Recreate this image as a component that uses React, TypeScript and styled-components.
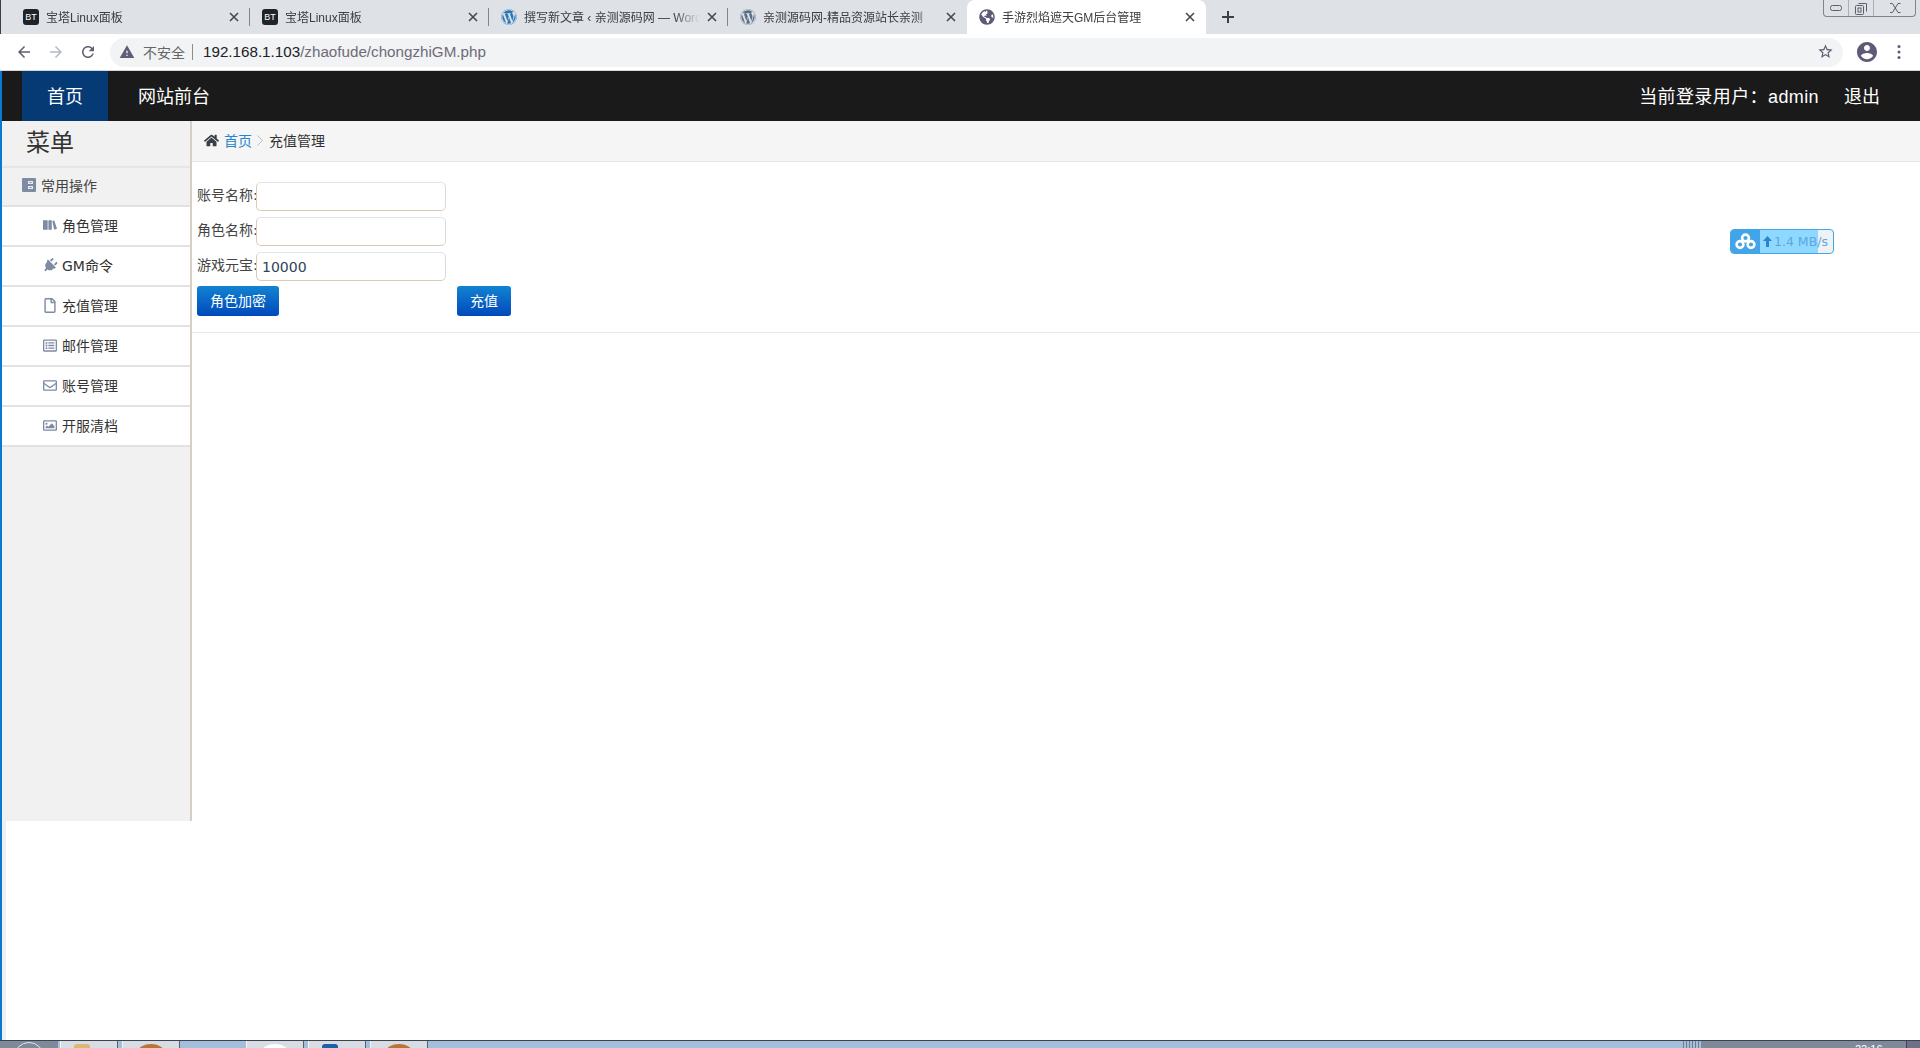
import React from 'react';
import styled, { createGlobalStyle } from 'styled-components';
import { FaGlobeAmericas, FaHome, FaPlug, FaRegEnvelope, FaRegFile, FaRegImage, FaRegListAlt, FaWordpress } from 'react-icons/fa';

const CJK = `"Noto Sans CJK SC", sans-serif`;

const GlobalStyle = createGlobalStyle`
  html, body {
    margin: 0;
    padding: 0;
    background: #fff;
  }
  * {
    box-sizing: border-box;
  }
`;

const Screen = styled.div`
  width: 1920px;
  height: 1048px;
  overflow: hidden;
  display: flex;
  flex-direction: column;
  background: #fff;
  font-family: "Liberation Sans", ${CJK};
`;

const TabStrip = styled.div`
  height: 34px;
  flex: none;
  display: flex;
  align-items: flex-start;
  padding-left: 10px;
  background: #dee1e6;
  border-left: 1px solid #3a3f48;
`;

const Tab = styled.div<{ $active?: boolean }>`
  position: relative;
  width: 239px;
  height: 34px;
  display: flex;
  align-items: center;
  padding: 0 11px 0 12px;
  font-size: 12px;
  color: #3c4043;
  background: ${p => (p.$active ? '#fff' : 'transparent')};
  border-radius: ${p => (p.$active ? '8px 8px 0 0' : '0')};
`;

const TabDivider = styled.span`
  position: absolute;
  right: 0;
  top: 8px;
  width: 1px;
  height: 18px;
  background: #80868b;
`;

const FaviconBox = styled.span`
  width: 16px;
  height: 16px;
  flex: none;
  display: flex;
  align-items: center;
  justify-content: center;
  color: #5f5a78;
  font-size: 16px;
`;

const BtBadge = styled(FaviconBox)`
  background: #20242a;
  color: #fff;
  border-radius: 3px;
  font-size: 9px;
  font-family: "Liberation Sans", sans-serif;
`;

const WpBadge = styled(FaviconBox)<{ $dim?: boolean }>`
  color: ${p => (p.$dim ? '#5b6f8a' : '#2a78b8')};
`;

const TabTitle = styled.span`
  flex: 1;
  min-width: 0;
  margin: 0 0 2px 7px;
  white-space: nowrap;
  overflow: hidden;
  -webkit-mask-image: linear-gradient(90deg, #000 84%, transparent 98%);
  mask-image: linear-gradient(90deg, #000 84%, transparent 98%);
`;

const TabClose = styled.svg`
  width: 10px;
  height: 10px;
  flex: none;
  margin-left: 4px;
  stroke: #45484d;
  stroke-width: 1.6;
`;

const NewTab = styled.svg`
  width: 12px;
  height: 12px;
  flex: none;
  margin: 11px 0 0 16px;
  stroke: #3c4043;
  stroke-width: 2;
`;

const WindowButtons = styled.div`
  margin-left: auto;
  margin-right: 4px;
  width: 93px;
  height: 17px;
  display: grid;
  grid-template-columns: 25px 25px 1fr;
  border: 1px solid #7c8594;
  border-top: none;
  border-radius: 0 0 4px 4px;
  color: #59606c;
`;

const WindowButton = styled.div`
  display: flex;
  align-items: center;
  justify-content: center;
  border-right: 1px solid #aab0ba;
  &:last-child {
    border-right: none;
  }
`;

const Toolbar = styled.div`
  height: 37px;
  flex: none;
  display: flex;
  align-items: center;
  padding: 0 14px 0 15px;
  background: #fff;
  border-bottom: 1px solid #d4d6d9;
`;

const NavIcon = styled.svg<{ $off?: boolean }>`
  width: 18px;
  height: 18px;
  flex: none;
  margin-right: 14px;
  fill: ${p => (p.$off ? '#b5bbc6' : '#5d5f6b')};
`;

const Omnibox = styled.div`
  width: 1733px;
  height: 29px;
  margin-left: -1px;
  display: flex;
  align-items: center;
  padding: 0 9px 1px 9px;
  border-radius: 15px;
  background: #f1f3f4;
  font-size: 15.2px;
  color: #6f6b7a;
`;

const WarnIcon = styled.svg`
  width: 16px;
  height: 16px;
  flex: none;
  fill: #635c78;
`;

const Insecure = styled.span`
  margin-left: 8px;
  font-size: 14px;
  color: #666;
`;

const UrlDivider = styled.span`
  width: 1px;
  height: 16px;
  margin: 0 10px 0 7px;
  background: #8a8d92;
`;

const UrlHost = styled.span`
  color: #202124;
`;

const StarIcon = styled.svg`
  width: 17px;
  height: 17px;
  margin-left: auto;
  fill: #5d5a70;
`;

const ProfileIcon = styled.svg`
  width: 24px;
  height: 24px;
  flex: none;
  margin-left: 12px;
  fill: #5f5a78;
`;

const MoreDots = styled.svg`
  width: 4px;
  height: 16px;
  flex: none;
  margin-left: 18px;
  fill: #5f5a78;
`;

const PageFrame = styled.div`
  flex: 1;
  min-height: 0;
  display: flex;
  flex-direction: column;
  border-left: 2px solid #0a78d6;
`;

const TopNav = styled.div`
  height: 50px;
  flex: none;
  display: flex;
  align-items: stretch;
  padding: 0 40px 0 20px;
  background: #1a1a1a;
  color: #fff;
  font-size: 18px;
`;

const NavLink = styled.a<{ $active?: boolean }>`
  display: flex;
  align-items: center;
  padding: 0 25px 2px ${p => (p.$active ? '25px' : '30px')};
  width: ${p => (p.$active ? '86px' : 'auto')};
  background: ${p => (p.$active ? '#063a75' : 'transparent')};
`;

const NavUser = styled.div`
  margin-left: auto;
  display: flex;
  align-items: center;
  gap: 25px;
  padding-bottom: 2px;
`;

const NavUserName = styled.span`
  letter-spacing: 0.4px;
`;

const PageBody = styled.div`
  flex: 1;
  min-height: 0;
  display: flex;
  align-items: flex-start;
  border-left: 4px solid #f0f0f0;
  font-family: "DejaVu Sans", ${CJK};
`;

const Sidebar = styled.div`
  width: 190px;
  height: 700px;
  flex: none;
  margin-left: -4px;
  background: #f1f1f1;
  border-right: 2px solid #d6cfc7;
`;

const SidebarTitle = styled.div`
  height: 47px;
  padding: 0 0 6px 24px;
  display: flex;
  align-items: center;
  font-size: 24px;
  color: #333;
  border-bottom: 2px solid #e6e6e6;
`;

const SidebarSection = styled.div`
  height: 39px;
  padding: 0 0 4px 20px;
  display: flex;
  align-items: center;
  gap: 5px;
  font-size: 14px;
  color: #444;
  border-bottom: 2px solid #e2e2e2;
`;

const SidebarItem = styled.a`
  height: 40px;
  padding: 0 0 2px 41px;
  display: flex;
  align-items: center;
  gap: 5px;
  font-size: 14px;
  color: #333;
  background: #fff;
  border-bottom: 2px solid #e2e2e2;
`;

const ItemIcon = styled.span`
  width: 14px;
  flex: none;
  display: flex;
  justify-content: center;
  color: #7f8ba3;
  font-size: 15px;
`;

const PlugIcon = styled(FaPlug)`
  transform: rotate(45deg);
`;

const Content = styled.div`
  flex: 1;
  min-width: 0;
`;

const Breadcrumb = styled.div`
  height: 41px;
  padding: 0 0 2px 12px;
  display: flex;
  align-items: center;
  font-size: 14px;
  color: #333;
  background: #f5f5f5;
  border-bottom: 1px solid #e5e5e5;
`;

const HomeIcon = styled.span`
  display: flex;
  font-size: 15px;
  color: #3a3f45;
  margin-right: 5px;
`;

const CrumbLink = styled.a`
  color: #2a84c9;
`;

const CrumbArrow = styled.svg`
  width: 6px;
  height: 11px;
  margin: 0 6px 0 5px;
  fill: none;
  stroke: #bbb;
`;

const FormPanel = styled.div`
  padding: 20px 0 16px 5px;
  display: flex;
  flex-direction: column;
  gap: 6px;
  border-bottom: 1px solid #e8e8e8;
`;

const FormRow = styled.label`
  display: flex;
  align-items: center;
  font-size: 14px;
  color: #444;
`;

const FieldName = styled.span`
  width: 59px;
  flex: none;
  white-space: nowrap;
  padding-bottom: 5px;
`;

const TextInput = styled.input`
  width: 190px;
  height: 29px;
  padding: 0 5px;
  border: 1px solid;
  border-color: #dfe3ea #d5dbe6 #d9cbb6 #d9cbb6;
  border-radius: 5px;
  outline: none;
  background: #fff;
  font: 14px "DejaVu Sans", sans-serif;
  color: #2f4458;
`;

const ButtonRow = styled.div`
  display: flex;
  gap: 178px;
  margin-top: -1px;
`;

const BlueButton = styled.button`
  height: 30px;
  padding: 0 13px 2px;
  border: none;
  border-radius: 3px;
  background: linear-gradient(180deg, #1283d2 0%, #0049bb 100%);
  color: #fff;
  font: 14px "DejaVu Sans", ${CJK};
`;

const SpeedBadge = styled.div`
  position: absolute;
  left: 1730px;
  top: 229px;
  width: 104px;
  height: 25px;
  display: flex;
  align-items: center;
  overflow: hidden;
  border: 1px solid #42a5ea;
  border-radius: 4px;
  background: linear-gradient(90deg, #8fd8ff 0%, #8fd8ff 85%, #eef2f5 85%);
  font: 12.500px "DejaVu Sans", sans-serif;
  color: #5aa7e0;
`;

const SpeedLogo = styled.div`
  width: 29px;
  height: 100%;
  flex: none;
  display: flex;
  align-items: center;
  justify-content: center;
  background: #42a5ea;
`;

const SpeedArrow = styled.svg`
  width: 9px;
  height: 11px;
  margin: 0 2px 0 3px;
  fill: #2a83cf;
`;

const Taskbar = styled.div`
  height: 8px;
  flex: none;
  display: flex;
  background: #a4bfdc;
  border-top: 1px solid #3c4350;
`;

const StartOrb = styled.div`
  width: 58px;
  background: #7e8a9a;
  display: flex;
  justify-content: center;
  padding-top: 1px;
`;

const OrbRing = styled.div`
  width: 30px;
  height: 30px;
  border: 1px solid #dfe6ee;
  border-radius: 50%;
`;

const TaskButton = styled.div<{ $gap?: number }>`
  width: 58px;
  margin-left: ${p => p.$gap ?? 4}px;
  display: flex;
  justify-content: center;
  padding-top: 3px;
  background: #d8dde4;
  border-left: 1px solid #f4f6f8;
  border-right: 1px solid #59606c;
`;

const TaskGlyph = styled.div<{ $color: string; $round?: boolean; $shift?: number }>`
  width: ${p => (p.$round ? 26 : 16)}px;
  height: 16px;
  margin-right: ${p => p.$shift ?? 0}px;
  border-radius: ${p => (p.$round ? '50%' : '3px 3px 0 0')};
  background: ${p => p.$color};
`;

const TrayGrip = styled.div`
  margin-left: auto;
  width: 20px;
  background: repeating-linear-gradient(90deg, #a4bfdc 0 2px, #6f7d90 2px 3px);
`;

const Tray = styled.div`
  width: 205px;
  background: #7e8a9a;
  position: relative;
`;

const TrayClock = styled.span`
  position: absolute;
  left: 154px;
  top: 3px;
  font-size: 11px;
  line-height: 11px;
  color: #fff;
`;

const ShowDesktop = styled.div`
  width: 14px;
  background: #6f6f8a;
  border-left: 1px solid #3c4350;
`;

const CloseGlyph = () => (
  <TabClose viewBox="0 0 10 10">
    <path d="M1 1l8 8M9 1l-8 8" />
  </TabClose>
);

const BooksIcon = () => (
  <svg width="15" height="12" viewBox="0 0 15 12" fill="currentColor">
    <path d="M0 1h5v10H0zM5.800 1h3.600v10H5.800zM10 2l2-1 3 9-3 1z" />
  </svg>
);

const SectionIcon = () => (
  <svg width="14" height="14" viewBox="0 0 14 14" style={{ flex: 'none' }}>
    <rect width="14" height="14" rx="1" fill="#7f8ba3" />
    <path d="M6 3h5v3H6zM6 8h5v3H6z" fill="#e8eaf0" />
    <path d="M7.500 4h2v1h-2zM7.500 9h2v1h-2z" fill="#7f8ba3" />
  </svg>
);

const tabs = [
  { title: '宝塔Linux面板', icon: 'bt' },
  { title: '宝塔Linux面板', icon: 'bt' },
  { title: '撰写新文章 ‹ 亲测源码网 — WordPress', icon: 'wp' },
  { title: '亲测源码网-精品资源站长亲测', icon: 'wpDim' },
  { title: '手游烈焰遮天GM后台管理', icon: 'globe', active: true },
];

const menu = [
  { label: '角色管理', icon: <BooksIcon /> },
  { label: 'GM命令', icon: <PlugIcon /> },
  { label: '充值管理', icon: <FaRegFile /> },
  { label: '邮件管理', icon: <FaRegListAlt /> },
  { label: '账号管理', icon: <FaRegEnvelope /> },
  { label: '开服清档', icon: <FaRegImage /> },
];

const fields = [
  { label: '账号名称:', value: '' },
  { label: '角色名称:', value: '' },
  { label: '游戏元宝:', value: '10000' },
];

const TabFavicon = ({ icon }: { icon: string }) => {
  if (icon === 'bt') return <BtBadge>BT</BtBadge>;
  if (icon === 'wp') return <WpBadge><FaWordpress /></WpBadge>;
  if (icon === 'wpDim') return <WpBadge $dim><FaWordpress /></WpBadge>;
  return <FaviconBox><FaGlobeAmericas /></FaviconBox>;
};

export default function App() {
  return (
    <Screen>
      <GlobalStyle />
      <TabStrip>
        {tabs.map((tab, index) => (
          <Tab key={index} $active={tab.active}>
            <TabFavicon icon={tab.icon} />
            <TabTitle>{tab.title}</TabTitle>
            <CloseGlyph />
            {index < 3 && <TabDivider />}
          </Tab>
        ))}
        <NewTab viewBox="0 0 12 12">
          <path d="M6 0v12M0 6h12" />
        </NewTab>
        <WindowButtons>
          <WindowButton>
            <svg width="12" height="6" viewBox="0 0 12 6" fill="none" stroke="currentColor">
              <rect x=".5" y=".5" width="11" height="5" rx="2" />
            </svg>
          </WindowButton>
          <WindowButton>
            <svg width="12" height="13" viewBox="0 0 12 13" fill="none" stroke="currentColor">
              <rect x=".5" y="3.500" width="8" height="9" rx="1" />
              <path d="M3.500 1.500h7a1 1 0 0 1 1 0v8" />
              <rect x="3" y="6" width="3" height="4" />
            </svg>
          </WindowButton>
          <WindowButton>
            <svg width="12" height="10" viewBox="0 0 12 10" fill="none" stroke="currentColor">
              <path d="M1 .5h2.500l5.500 9h2.500M1 9.500h2.500l5.500-9h2.500" />
            </svg>
          </WindowButton>
        </WindowButtons>
      </TabStrip>

      <Toolbar>
        <NavIcon viewBox="0 0 24 24"><path d="M20 11H7.830l5.590-5.590L12 4l-8 8 8 8 1.410-1.410L7.830 13H20v-2z" /></NavIcon>
        <NavIcon $off viewBox="0 0 24 24"><path d="M12 4l-1.410 1.410L16.170 11H4v2h12.170l-5.580 5.590L12 20l8-8z" /></NavIcon>
        <NavIcon viewBox="0 0 24 24"><path d="M17.650 6.350C16.200 4.900 14.210 4 12 4c-4.420 0-7.990 3.580-7.990 8s3.570 8 7.990 8c3.730 0 6.840-2.550 7.730-6h-2.080c-.82 2.330-3.040 4-5.650 4-3.310 0-6-2.690-6-6s2.690-6 6-6c1.660 0 3.140.69 4.220 1.780L13 11h7V4l-2.350 2.350z" /></NavIcon>
        <Omnibox>
          <WarnIcon viewBox="0 0 24 24"><path fillRule="evenodd" d="M1 21h22L12 2 1 21zm12-3h-2v-2h2v2zm0-4h-2v-4h2v4z" /></WarnIcon>
          <Insecure>不安全</Insecure>
          <UrlDivider />
          <span><UrlHost>192.168.1.103</UrlHost>/zhaofude/chongzhiGM.php</span>
          <StarIcon viewBox="0 0 24 24"><path d="M22 9.240l-7.190-.62L12 2 9.190 8.630 2 9.240l5.460 4.730L5.820 21 12 17.270 18.180 21l-1.630-7.030L22 9.240zM12 15.400l-3.760 2.270 1-4.280-3.320-2.880 4.380-.38L12 6.100l1.710 4.040 4.380.38-3.320 2.880 1 4.280L12 15.400z" /></StarIcon>
        </Omnibox>
        <ProfileIcon viewBox="0 0 24 24"><path d="M12 2C6.480 2 2 6.480 2 12s4.480 10 10 10 10-4.480 10-10S17.520 2 12 2zm0 3c1.660 0 3 1.340 3 3s-1.340 3-3 3-3-1.340-3-3 1.340-3 3-3zm0 14.200c-2.500 0-4.710-1.280-6-3.220.03-1.990 4-3.080 6-3.080 1.990 0 5.970 1.090 6 3.080-1.290 1.940-3.500 3.220-6 3.220z" /></ProfileIcon>
        <MoreDots viewBox="0 0 4 16">
          <circle cx="2" cy="2.500" r="1.500" />
          <circle cx="2" cy="8" r="1.500" />
          <circle cx="2" cy="13.500" r="1.500" />
        </MoreDots>
      </Toolbar>

      <PageFrame>
        <TopNav>
          <NavLink $active>首页</NavLink>
          <NavLink>网站前台</NavLink>
          <NavUser>
            <NavUserName>当前登录用户：admin</NavUserName>
            <span>退出</span>
          </NavUser>
        </TopNav>
        <PageBody>
          <Sidebar>
            <SidebarTitle>菜单</SidebarTitle>
            <SidebarSection>
              <SectionIcon />
              常用操作
            </SidebarSection>
            {menu.map(item => (
              <SidebarItem key={item.label}>
                <ItemIcon>{item.icon}</ItemIcon>
                {item.label}
              </SidebarItem>
            ))}
          </Sidebar>
          <Content>
            <Breadcrumb>
              <HomeIcon><FaHome /></HomeIcon>
              <CrumbLink>首页</CrumbLink>
              <CrumbArrow viewBox="0 0 6 11"><path d="M.5.5l5 5-5 5" /></CrumbArrow>
              充值管理
            </Breadcrumb>
            <FormPanel>
              {fields.map(field => (
                <FormRow key={field.label}>
                  <FieldName>{field.label}</FieldName>
                  <TextInput defaultValue={field.value} />
                </FormRow>
              ))}
              <ButtonRow>
                <BlueButton>角色加密</BlueButton>
                <BlueButton>充值</BlueButton>
              </ButtonRow>
            </FormPanel>
          </Content>
        </PageBody>
      </PageFrame>

      <SpeedBadge>
        <SpeedLogo>
          <svg width="21" height="17" viewBox="0 0 21 17" fill="none" stroke="#fff" strokeWidth="2.600">
            <circle cx="10.500" cy="5" r="3.400" />
            <circle cx="5" cy="11.500" r="3.400" />
            <circle cx="16" cy="11.500" r="3.400" />
          </svg>
        </SpeedLogo>
        <SpeedArrow viewBox="0 0 9 11"><path d="M4.500 0L9 5H6v6H3V5H0z" /></SpeedArrow>
        1.4 MB/s
      </SpeedBadge>

      <Taskbar>
        <StartOrb><OrbRing /></StartOrb>
        <TaskButton $gap={2}><TaskGlyph $color="#d9b878" $shift={14} /></TaskButton>
        <TaskButton><TaskGlyph $color="#b9743a" $round /></TaskButton>
        <TaskButton $gap={66}><TaskGlyph $color="#fff" $round /></TaskButton>
        <TaskButton><TaskGlyph $color="#1f5fa8" $shift={14} /></TaskButton>
        <TaskButton><TaskGlyph $color="#b9743a" $round /></TaskButton>
        <TrayGrip />
        <Tray><TrayClock>22:16</TrayClock></Tray>
        <ShowDesktop />
      </Taskbar>
    </Screen>
  );
}
